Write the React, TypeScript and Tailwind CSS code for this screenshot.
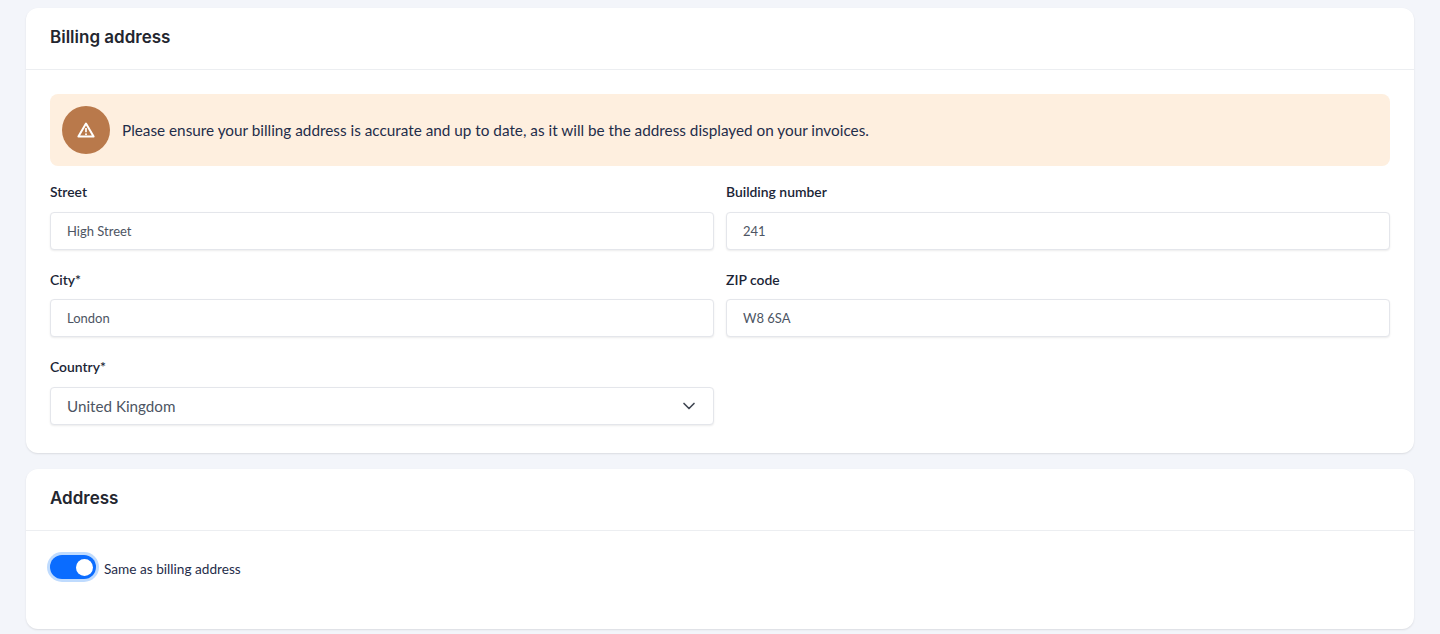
import { ChevronDown } from "lucide-react";

const body = "font-['Lato','Noto_Sans',sans-serif]";

function Field({ label, value }: { label: string; value: string }) {
  return (
    <div className="flex flex-col">
      <label className="h-[20px] pt-[0.5px] text-[13.9px] leading-[20px] font-semibold text-[#1b2536]">{label}</label>
      <div className="mt-[10px] flex h-[38px] items-center rounded-[4px] border border-[#e4e6eb] bg-white pt-[1px] pl-[16px] text-[13px] text-[#4d5563] shadow-[0_1px_2px_rgba(0,0,0,0.08)]">
        {value}
      </div>
    </div>
  );
}

function CardHeader({ title }: { title: string }) {
  return (
    <div className="flex h-[62px] items-center border-b border-[#eceef1] px-[24px] pb-[1px] font-['Inter',sans-serif] text-[17px] font-semibold text-[#23262f]">
      {title}
    </div>
  );
}

export default function App() {
  return (
    <div className={`flex h-[634px] flex-col gap-[16px] overflow-hidden bg-[#f3f5fa] px-[26px] pt-[8px] ${body}`}>
      <section className="h-[445px] shrink-0 rounded-[12px] bg-white shadow-[0_1px_2px_rgba(0,0,0,0.1)]">
        <CardHeader title="Billing address" />
        <div className="px-[24px] pt-[24px]">
          <div className="flex h-[71.75px] items-center gap-[12px] rounded-[8px] bg-[#feefdf] px-[12px] text-[15.3px] text-[#1f2d4a]">
            <div className="flex h-[48px] w-[48px] items-center justify-center rounded-full bg-[#b9794b]">
              <svg width="18" height="16" viewBox="0 0 18 16" fill="none">
                <path d="M9 1.5 L16.6 14.6 H1.4 Z" stroke="#fff" strokeWidth="2" strokeLinejoin="round" />
                <path d="M9 6v4.2" stroke="#fff" strokeWidth="1.7" />
                <circle cx="9" cy="12.2" r="1" fill="#fff" />
              </svg>
            </div>
            <span className="pt-[2px]">Please ensure your billing address is accurate and up to date, as it will be the address displayed on your invoices.</span>
          </div>
          <div className="mt-[16px] grid grid-cols-2 gap-x-[12px] gap-y-[19.5px]">
            <Field label="Street" value="High Street" />
            <Field label="Building number" value="241" />
            <Field label="City*" value="London" />
            <Field label="ZIP code" value="W8 6SA" />
            <div className="flex flex-col">
              <label className="h-[20px] pt-[0.5px] text-[13.9px] leading-[20px] font-semibold text-[#1b2536]">Country*</label>
              <div className="mt-[10px] flex h-[38px] items-center justify-between rounded-[4px] border border-[#e4e6eb] bg-white pl-[16px] pr-[14px] text-[15.2px] text-[#4d5563] shadow-[0_1px_2px_rgba(0,0,0,0.08)]">
                <span className="pt-[2px]">United Kingdom</span>
                <ChevronDown size={20} strokeWidth={2} className="text-[#3f4652]" />
              </div>
            </div>
          </div>
        </div>
      </section>
      <section className="h-[160px] shrink-0 rounded-[12px] bg-white shadow-[0_1px_2px_rgba(0,0,0,0.1)]">
        <CardHeader title="Address" />
        <div className="flex items-center gap-[8px] px-[24px] pt-[24px]">
          <div className="flex h-[24px] w-[46px] items-center justify-end rounded-full bg-[#0a6cff] pr-[3px] shadow-[0_0_0_3px_#bfdbfe]">
            <div className="h-[17px] w-[17px] rounded-full bg-white" />
          </div>
          <span className="pt-[4px] text-[13.65px] leading-[18px] text-[#1f2d4a]">Same as billing address</span>
        </div>
      </section>
    </div>
  );
}
